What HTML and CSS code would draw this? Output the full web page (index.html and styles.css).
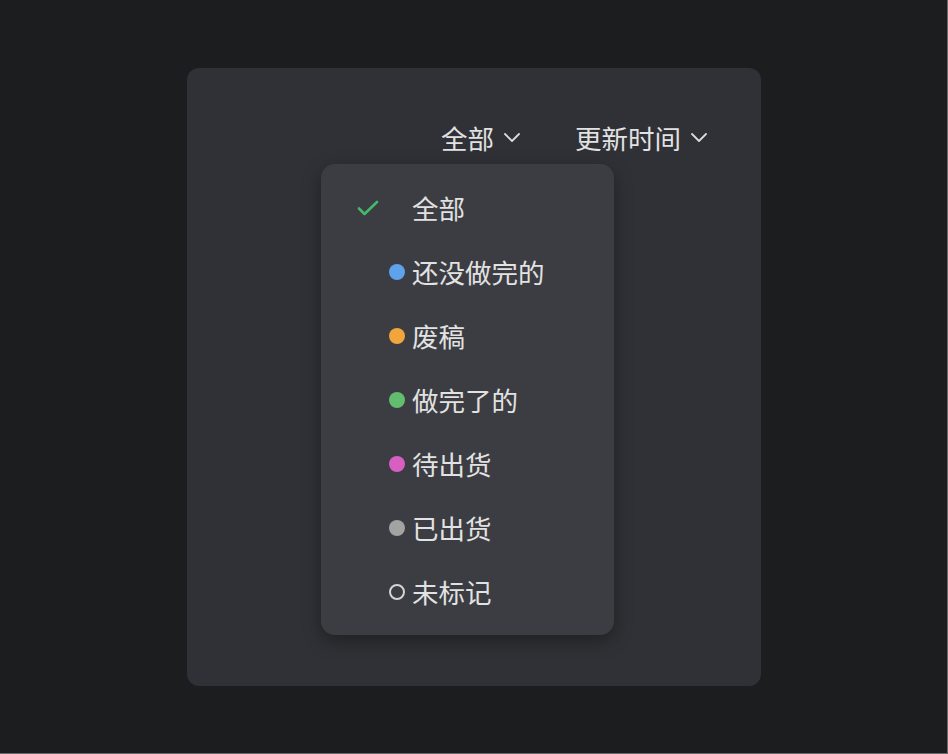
FILE: index.html
```html
<!DOCTYPE html>
<html lang="zh-CN">
<head>
<meta charset="utf-8">
<title>筛选</title>
<link rel="stylesheet" href="styles.css">
</head>
<body>
<div class="page">
  <div class="panel">
    <div class="toolbar">
      <div class="trigger">
        <span>全部</span>
        <svg class="chev" width="16" height="9" viewBox="0 0 16 9"><path d="M1 1 L8 8 L15 1" fill="none" stroke="currentColor" stroke-width="1.8" stroke-linecap="round" stroke-linejoin="round"/></svg>
      </div>
      <div class="trigger">
        <span>更新时间</span>
        <svg class="chev" width="16" height="9" viewBox="0 0 16 9"><path d="M1 1 L8 8 L15 1" fill="none" stroke="currentColor" stroke-width="1.8" stroke-linecap="round" stroke-linejoin="round"/></svg>
      </div>
      <ul class="menu">
        <li class="item">
          <span class="check"><svg width="22" height="16" viewBox="0 0 22 16"><path d="M2 8.5 L7.5 14 L20 2" fill="none" stroke="#45b86c" stroke-width="2.6" stroke-linecap="round" stroke-linejoin="round"/></svg></span>
          <span class="dot none"></span>
          <span class="label">全部</span>
        </li>
        <li class="item"><span class="check"></span><span class="dot blue"></span><span class="label">还没做完的</span></li>
        <li class="item"><span class="check"></span><span class="dot orange"></span><span class="label">废稿</span></li>
        <li class="item"><span class="check"></span><span class="dot green"></span><span class="label">做完了的</span></li>
        <li class="item"><span class="check"></span><span class="dot pink"></span><span class="label">待出货</span></li>
        <li class="item"><span class="check"></span><span class="dot gray"></span><span class="label">已出货</span></li>
        <li class="item"><span class="check"></span><span class="dot hollow"></span><span class="label">未标记</span></li>
      </ul>
    </div>
  </div>
</div>
</body>
</html>
```
FILE: styles.css
```css
html, body {
  margin: 0;
  padding: 0;
  background: #1c1d1f;
}
body {
  font-family: "Noto Sans CJK SC", "Noto Sans", sans-serif;
  color: #e2e2e2;
}
.page {
  box-sizing: border-box;
  width: 948px;
  height: 754px;
  display: flex;
  align-items: center;
  justify-content: center;
  border-right: 1px solid #6a6a6a;
  border-bottom: 1px solid #6a6a6a;
}
.panel {
  width: 574px;
  height: 618px;
  background: #303136;
  border-radius: 12px;
  box-sizing: border-box;
  padding: 50px 54px 0 0;
  margin-left: 1px;
}
.toolbar {
  position: relative;
  display: flex;
  justify-content: flex-end;
  gap: 55px;
  height: 40px;
}
.trigger {
  display: flex;
  align-items: center;
  gap: 10px;
  font-size: 26.5px;
  line-height: 40px;
  color: #e2e2e2;
}
.chev {
  color: #dadada;
}
.menu {
  position: absolute;
  left: 134px;
  top: 46px;
  width: 293px;
  margin: 0;
  padding: 12px 0 11px;
  list-style: none;
  background: #3c3d43;
  border-radius: 14px;
  box-shadow: 0 6px 18px rgba(0, 0, 0, 0.35);
}
.item {
  display: flex;
  align-items: center;
  height: 64px;
  padding-left: 36px;
  font-size: 26.5px;
}
.check {
  width: 32px;
  display: flex;
  align-items: center;
}
.dot {
  width: 16px;
  height: 16px;
  border-radius: 50%;
  margin-right: 8px;
  box-sizing: border-box;
  flex: none;
}
.dot.none { background: transparent; }
.dot.blue { background: #5ea2ea; }
.dot.orange { background: #f0a63c; }
.dot.green { background: #62bd6f; }
.dot.pink { background: #d95ec2; }
.dot.gray { background: #a3a3a3; }
.dot.hollow { border: 2px solid #d4d4d4; }
.label {
  line-height: 40px;
  margin-left: -1px;
  color: #e2e2e2;
}
```
